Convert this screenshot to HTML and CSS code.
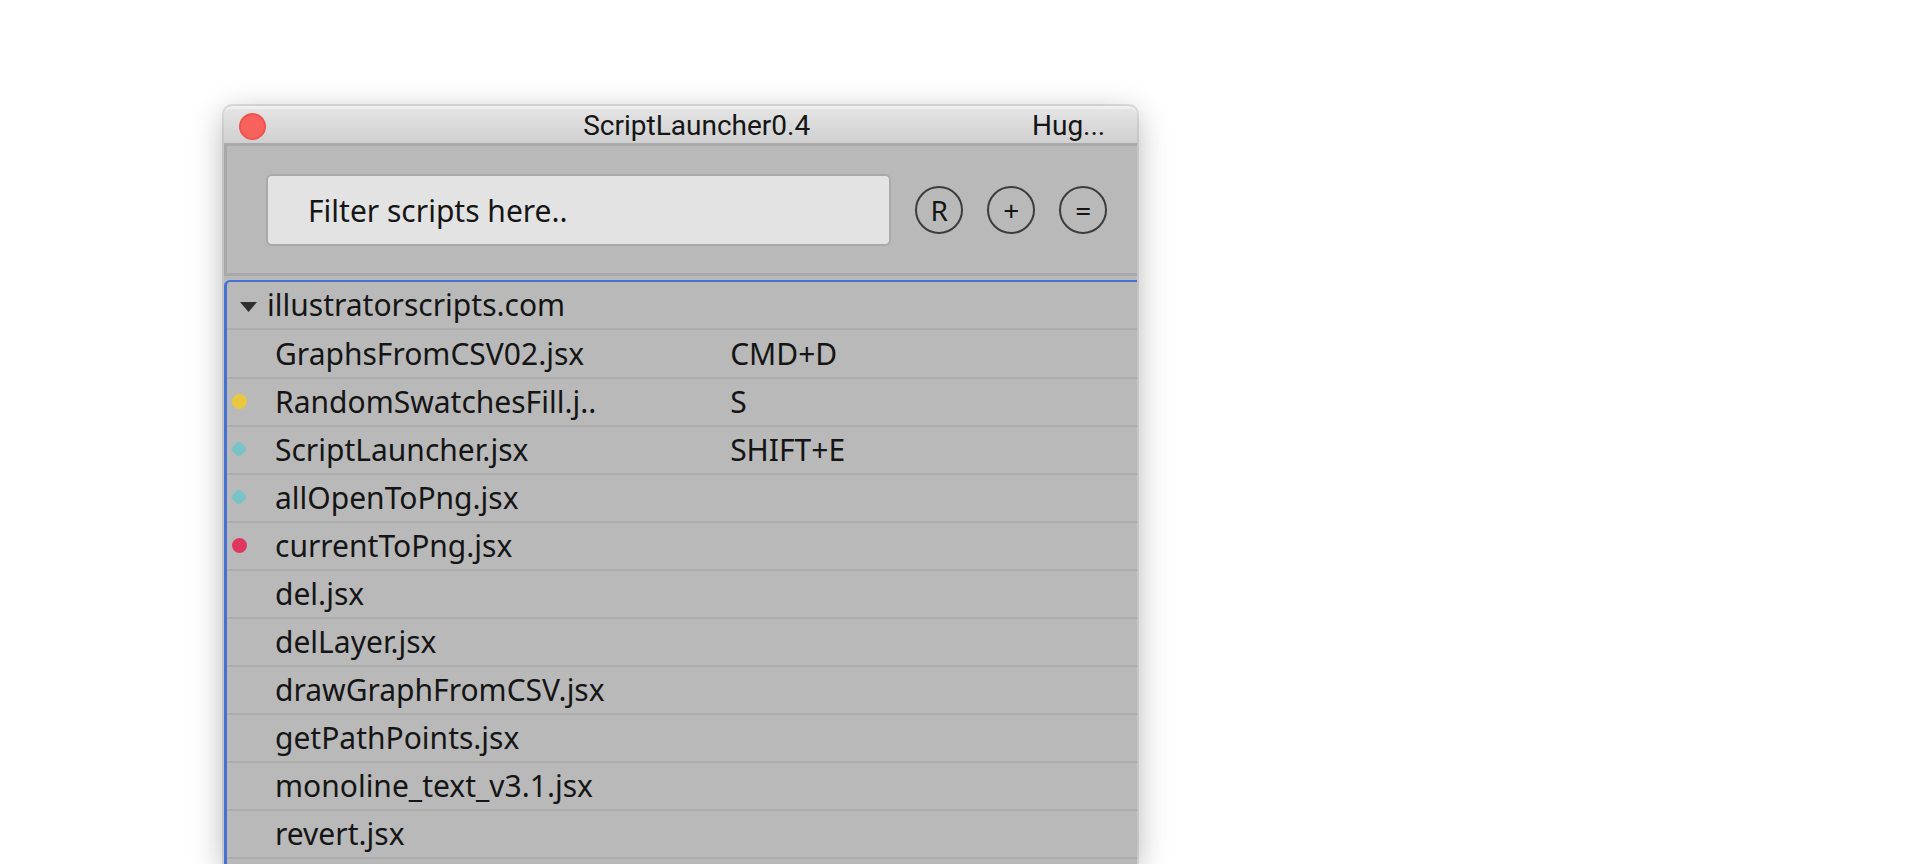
FILE: index.html
```html
<!DOCTYPE html>
<html lang="en">
<head>
    <meta charset="UTF-8">
    <meta name="viewport" content="width=device-width, initial-scale=1.0">
    <title>ScriptLauncher0.4</title>
    <link rel="stylesheet" href="styles.css">
</head>
<body>
    <main class="window">
        <!-- Title bar -->
        <header class="titlebar">
            <button type="button" class="close" aria-label="Close"></button>
            <h1 class="title">ScriptLauncher0.4</h1>
            <span class="owner">Hug...</span>
        </header>

        <!-- Filter and actions -->
        <form class="toolbar">
            <input type="text" class="filter" name="filter" aria-label="Filter scripts" placeholder="Filter scripts here..">
            <button type="button" class="round" aria-label="Reload">R</button>
            <button type="button" class="round" aria-label="Add">+</button>
            <button type="button" class="round" aria-label="Options">=</button>
        </form>

        <!-- Script list -->
        <div class="list">
            <button type="button" class="folder" aria-expanded="true">
                <svg class="arrow" viewBox="0 0 18 14" aria-hidden="true"><path d="M0 4H17L8.5 14Z"/></svg>
                illustratorscripts.com
            </button>
            <table class="scripts">
                <tbody>
                    <tr><td class="mark"></td><td class="name">GraphsFromCSV02.jsx</td><td>CMD+D</td></tr>
                    <tr><td class="mark"><span class="dot yellow"></span></td><td class="name">RandomSwatchesFill.j..</td><td>S</td></tr>
                    <tr><td class="mark"><span class="dot teal"></span></td><td class="name">ScriptLauncher.jsx</td><td>SHIFT+E</td></tr>
                    <tr><td class="mark"><span class="dot teal"></span></td><td class="name">allOpenToPng.jsx</td><td></td></tr>
                    <tr><td class="mark"><span class="dot red"></span></td><td class="name">currentToPng.jsx</td><td></td></tr>
                    <tr><td class="mark"></td><td class="name">del.jsx</td><td></td></tr>
                    <tr><td class="mark"></td><td class="name">delLayer.jsx</td><td></td></tr>
                    <tr><td class="mark"></td><td class="name">drawGraphFromCSV.jsx</td><td></td></tr>
                    <tr><td class="mark"></td><td class="name">getPathPoints.jsx</td><td></td></tr>
                    <tr><td class="mark"></td><td class="name">monoline_text_v3.1.jsx</td><td></td></tr>
                    <tr><td class="mark"></td><td class="name">revert.jsx</td><td></td></tr>
                </tbody>
            </table>
        </div>
    </main>
</body>
</html>
```
FILE: styles.css
```css
* {
    box-sizing: border-box;
}
body {
    display: flex;
    height: 100vh;
    margin: 0;
    padding: 106px 224px 0;
    overflow: hidden;
    background-color: #fff;
    color: #151515;
    font-family: "Noto Sans", "Open Sans", sans-serif;
    font-size: 30px;
}
button, input {
    color: inherit;
    font: inherit;
}
.window {
    display: flex;
    flex-direction: column;
    width: 62%;
    background-color: #b9b9b9;
    border-radius: 8px 8px 0 0;
    box-shadow: 0 0 0 2px rgba(0, 0, 0, 0.1), 0 8px 32px rgba(0, 0, 0, 0.3);
}
.titlebar {
    display: grid;
    grid-template-columns: 7fr auto 6fr;
    align-items: center;
    height: 37px;
    padding: 0 32px 0 15px;
    border-top: 3px solid #efefef;
    border-radius: 8px 8px 0 0;
    background: linear-gradient(#e4e4e4, #d0d0d0);
    font-family: Roboto, sans-serif;
    font-size: 28px;
    line-height: 32px;
}
.close {
    width: 27px;
    height: 27px;
    padding: 0;
    border: 2px solid #f0524d;
    border-radius: 50%;
    background-color: #f8625c;
}
.title {
    margin: 0;
    font-size: 28px;
    font-weight: normal;
}
.owner {
    text-align: right;
}
.toolbar {
    display: flex;
    align-items: center;
    gap: 24px;
    margin-bottom: 4px;
    padding: 28px 30px 27px 39px;
    border: 3px solid #a9a9a9;
    border-right: none;
}
.filter {
    flex: 1;
    min-width: 0;
    height: 72px;
    padding: 0 40px;
    border: 2px solid #a9a9a9;
    border-radius: 6px;
    background-color: #e3e3e3;
}
.filter::placeholder {
    color: #151515;
    opacity: 1;
}
.round {
    width: 48px;
    height: 48px;
    padding: 0;
    border: 2px solid #3c3c3c;
    border-radius: 50%;
    background: none;
    font-size: 28px;
    line-height: 44px;
}
.list {
    flex: 1;
    min-height: 0;
    overflow: hidden;
    border-top: 2px solid #4472d0;
    border-left: 3px solid #4472d0;
    border-top-left-radius: 6px;
}
.folder {
    display: flex;
    align-items: center;
    gap: 9px;
    width: 100%;
    height: 48px;
    padding: 0 13px;
    border: none;
    border-bottom: 2px solid #acacac;
    background: none;
    line-height: 40px;
    text-align: left;
}
.arrow {
    width: 18px;
    height: 14px;
    fill: #2e2e2e;
}
.scripts {
    width: 100%;
    border-collapse: collapse;
    table-layout: fixed;
}
.scripts tr {
    height: 48px;
    border-bottom: 2px solid #acacac;
}
.scripts td {
    padding: 0;
    line-height: 40px;
}
.scripts .mark {
    width: 48px;
    padding: 0 0 2px 5px;
}
.scripts .name {
    width: 50%;
}
.dot {
    display: block;
    width: 15px;
    height: 15px;
    border-radius: 50%;
}
.yellow {
    background-color: #e9c83f;
}
.teal {
    width: 12px;
    height: 12px;
    margin-left: 1px;
    border-radius: 3px;
    background-color: #78c3c6;
    transform: rotate(45deg);
}
.red {
    background-color: #df3760;
}
```
